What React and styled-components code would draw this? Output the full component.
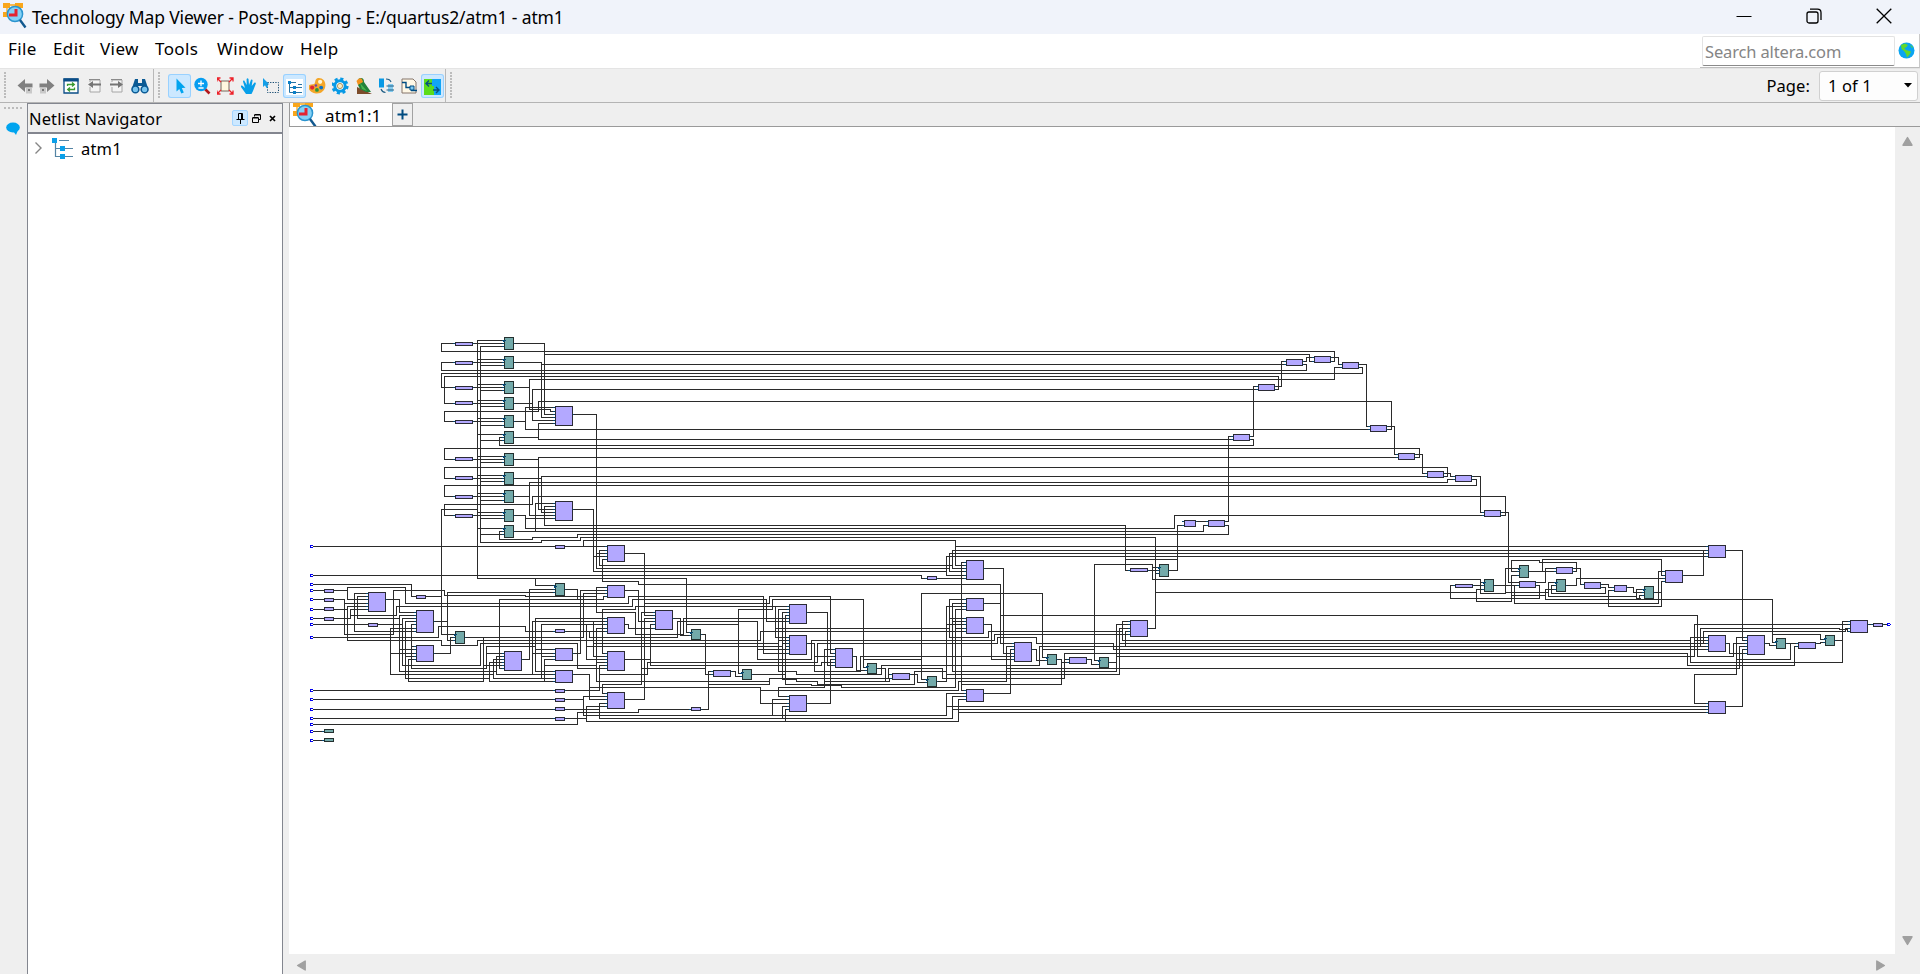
import React from "react";
import styled, { createGlobalStyle, css } from "styled-components";

const Global = createGlobalStyle`
  * { box-sizing: border-box; }
  html, body { margin: 0; padding: 0; }
  body {
    width: 1920px; height: 974px; overflow: hidden; background: #fff; color: #000;
    font-family: "Noto Sans", "Open Sans", sans-serif; font-size: 16px;
  }
  svg { display: block; flex: none; }
`;

/* ---------- schematic data: each sheet is drawn on a 3-units-per-pixel grid ---------- */

const SHEETS = [
  {
    x: 300, y: 325,
    wires: `M613 46H532V760 M613 64H541V652H724V646H841V637H2566 M613 628H541 M613 619H598V643H697V637H832V628H2550
M850 664V646H1966 M613 337H598V361H2550
M520 55H613 M520 112H613 M520 187H613 M520 235H613 M520 289H613 M520 403H613 M520 460H613 M520 514H613 M520 571H613
M532 103H613 M541 121H613 M532 178H613 M541 196H613 M532 226H613 M541 244H613 M532 280H613 M541 301H613 M532 328H613 M541 346H613
M532 394H613 M541 412H613 M532 451H613 M541 469H613 M532 505H613 M541 526H613 M532 562H613 M541 580H613 M532 610H613
M466 55H424V79H2550 M466 112H424V136H2550 M466 187H424V145H2550 M466 235H433V154H2550 M466 289H433V259H715V229H2550
M466 403H433V370H2550 M466 460H433V427H2550 M466 514H433V481H2550 M466 571H433V538H697V514H2550 M532 553H424V928H466
M641 55H733V268H766 M733 88H2550 M641 112H724V277H766 M724 118H2550 M641 187H688V253H751V259H766 M688 187V163H2550
M641 235H697V286H766 M697 235V193H2550 M641 289H676V247H766 M676 289V313H2550 M641 337H715V295H766 M715 337V343H2550
M641 403H715V553H766 M715 403V397H2550 M641 460H724V562H766 M724 460V454H2550 M641 514H688V571H766 M688 514V472H2550
M641 571H676V610H2550 M676 580H766 M641 619H2550 M706 619V535H766 M766 544H733V601H2476V735
M819 268H889V730 M819 553H880V739`,
    cells: [
      [612, 36, 642, 75], [612, 93, 642, 132], [612, 168, 642, 207], [612, 216, 642, 255], [612, 270, 642, 309], [612, 318, 642, 357],
      [612, 384, 642, 423], [612, 441, 642, 480], [612, 495, 642, 534], [612, 552, 642, 591], [612, 600, 642, 639],
    ],
    luts: [
      [465, 51, 519, 63], [465, 108, 519, 120], [465, 183, 519, 195], [465, 228, 519, 240], [465, 285, 519, 297],
      [465, 396, 519, 408], [465, 453, 519, 465], [465, 510, 519, 522], [465, 567, 519, 579],
      [765, 243, 819, 303], [765, 528, 819, 588],
    ],
  },
  {
    x: 300, y: 535,
    wires: `M39 34H922 M850 16V34 M922 46H898V91H990 M922 55H889 M889 0V100H990 M880 0V109H990 M880 64H922 M922 73H907V139H990
M39 121H990 M532 121V130H990 M706 130V151H766 M39 148H334V184H424 M39 166H142V193H205 M142 166V157H316V205H985
M39 193H133V298H280V166H433V181H676V184H889 M133 205H205 M39 223H142 M205 214H142V316H424V331H532V316H990
M39 250H151V223H205 M151 241H289V214H990 M39 268H307 M205 175H163V289H349 M205 184H172V250H298
M349 280H271V418H580 M271 355H349 M258 193H298V232H349 M349 241H298V409H589 M298 343H349
M349 250H307V391H541V325H832V400H922 M349 259H316V430H568 M316 364H349 M349 268H334V400H559V334H706 M334 334H349
M349 373H325V439H550V307 M402 259H442 M402 355H451V307H466 M442 172V316H466 M442 172H766
M39 307H415V274H676V289H766 M495 307H850V175H922 M559 355H613 M589 364V418H766 M613 364H589 M613 373H580V430H766 M613 382H568V439H766
M550 391H613 M613 400H598V193H910V184H922 M666 373H688V163H766 M795 163H832V193
M922 250H706V409H766 M706 343H766 M922 259H697V418 M697 355H766 M922 268H724V430 M724 364H766 M766 373H733V439 M733 391H889
M819 355H841V166H922 M795 289H922 M868 289V307H990 M859 268V373H922 M859 334H990 M880 259V364H922 M880 325H990
M922 157H889V232H990 M922 280H889V439H990 M889 382H922 M907 355V223H990 M907 355H922 M795 466H898V391H922 M898 418H990
M819 418H868V493H922 M868 457H990 M922 475H907V448H990 M922 484H850V541H990 M795 493H850 M922 505H898V550H990 M795 523H898
M922 514H859V559H990 M795 550H859 M39 466H766 M39 493H766 M39 523H766 M39 550H766 M39 568H832V532H990 M39 589H72 M39 616H72`,
    cells: [[765, 144, 795, 183], [465, 288, 495, 327], [72, 582, 102, 594], [72, 609, 102, 621]],
    luts: [
      [765, 30, 795, 42], [72, 162, 102, 174], [72, 189, 102, 201], [72, 216, 102, 228], [72, 246, 102, 258], [204, 264, 234, 276],
      [348, 180, 378, 192], [204, 171, 258, 231], [348, 225, 402, 294], [348, 330, 402, 381], [612, 348, 666, 408],
      [765, 282, 795, 294], [765, 339, 819, 378], [765, 405, 819, 444], [765, 462, 795, 474], [765, 489, 795, 501],
      [765, 516, 795, 528], [765, 546, 795, 558], [921, 30, 975, 81], [921, 150, 975, 189], [921, 246, 975, 297],
      [921, 348, 975, 408], [921, 471, 975, 522],
    ],
    pins: [34, 121, 148, 166, 193, 223, 250, 268, 307, 466, 493, 523, 550, 568, 589, 616].map((y) => [30, y]),
  },
  {
    x: 570, y: 535,
    wires: `M180 91H930 M180 100H930 M180 109H930 M180 121H930 M180 130H349V292H364 M349 268H505 M97 139H205V148H930
M164 55H223V241H256 M223 205H598V184H781V355H796 M164 493H223V250H256 M164 166H205V259H256 M256 232H214V448H97V475H112
M214 400H406 M393 298H406V418H430 M256 268H241V391H754V382H796 M164 373H241 M164 268H175V280H256
M89 418H232V382H742V325H930 M175 205V184H580V355H658 M180 214H187V193H589V259H658 M97 223H196V214H658 M616 214V307H658 M616 280H930
M79 232H196V298H340V250H658 M180 307H322V259H562V373H724V316H930 M562 343H658 M180 316H571V289H930 M180 325H625 M180 334H637
M658 223H625V409H679V418H934V391 M658 232H637V433H679V439H742V448H930 M658 241H646V448H724V451H814V457H930
M625 316H658 M637 325H658 M646 334H658 M309 250H331V301H364 M711 232H772V391H796 M711 325H733V409H871V364H930 M733 364H796
M796 343H763V457H625V484H658 M763 439H946 M79 439H598V430H930 M430 409H415V523H393 M415 448H598V430
M796 373H781V505H711 M658 493H607V541 M658 505H571V457H180 M571 466H930 M658 514H637V550 M658 523H646V559
M517 415H505V223H607V193H880V397H892 M880 373H930 M482 409H496V424H517 M545 418H646 M364 523H205V532H180
M849 364H859V406H892 M921 400H946V439 M180 541H930 M180 550H930 M180 559H930`,
    cells: [[363, 282, 393, 315], [516, 402, 546, 435], [891, 384, 921, 417]],
    luts: [
      [255, 225, 309, 285], [657, 207, 711, 267], [657, 300, 711, 360], [795, 339, 849, 399], [429, 405, 483, 426],
      [363, 516, 393, 528], [657, 480, 711, 531],
    ],
  },
  {
    x: 880, y: 535,
    wires: `M826 7V280H804 M226 16V91H259 M226 34H1620 M0 91H217V46H1620 M217 91V100H259 M0 100H208V55H1620 M208 100V109H259
M0 109H199V64H1620 M199 109V121H259 M0 121H124V130H142 M171 130H259 M259 82H244V466H259 M0 148H361V325H403 M361 241H1620 M361 205H312
M312 100H370V355H403 M142 433H124V175H487V367H502 M487 343H643 M658 376H643V88H817V133H1620 M817 97H838 M0 373H124
M259 193H208V307H325V289H727 M751 259H727V316H1620 M751 289H736V334 M751 280H718V418H199 M751 268H709V409H217 M718 325H1620 M709 364H1620
M4 418V391H478V334H1620 M0 280H208 M0 289H259 M208 250H259 M259 205H217V409 M217 259H259 M199 439V214H259 M199 268H259
M259 223H226V457H0 M226 280H259 M0 316H343V298H751 M0 325H352V307H469V325H700V343H1620 M0 364H403 M312 268H334V373H403
M532 373H544V448H244 M544 382H568 M568 373H553 M1620 355H553V430H187V400H25V430H0 M621 373H634V388H658 M687 382H709
M403 334H379V439H235V466H0 M379 400H1620 M403 343H391V475H312 M455 343H469V376H502 M0 400H16V439 M37 418H25 M0 439H28V430H37
M90 418H112V442H142 M171 439H199 M0 448H103V409H199 M259 475H199V541H0 M199 514H1620 M259 484H217V550H0 M217 523H1620
M259 493H235V559H0 M235 532H1620 M751 105H736 M804 106H838 M736 73H892 M867 106H892V0 M826 115H838 M826 172H1620`,
    cells: [[141, 423, 171, 456], [501, 357, 531, 390], [657, 366, 687, 399], [837, 87, 867, 126]],
    luts: [
      [258, 75, 312, 135], [141, 123, 171, 135], [258, 189, 312, 228], [258, 246, 312, 297], [402, 321, 456, 381],
      [258, 462, 312, 501], [36, 414, 90, 435], [567, 366, 621, 387], [750, 255, 804, 306], [750, 99, 804, 111],
    ],
  },
  {
    x: 1150, y: 335,
    wires: `M0 49H553V79H543 M0 58H478V79H493 M0 88H409 M0 106H469V88H459 M0 115H637V97H627 M0 124H385V163H375 M0 133H553V97H577
M0 163H325 M0 199H724V283H711 M0 283H661 M0 313H250 M300 313H310V331H0 M0 340H808V367H795 M0 367H745 M0 397H892V424H882 M0 424H832
M0 442H892V433H916 M0 451H979V433H966 M0 484H1066V541H1053 M0 580H73V541H1003 M0 589H160V571H175 M0 598H235V571H225
M225 559H235V304H250 M300 304H310V154H325 M375 154H394V79H409 M459 79H469V67H493 M543 67H565V88H577 M627 88H649V274H661
M711 274H733V358H745 M795 358H817V415H832 M882 415H901V424H916 M966 424H991V532H1003 M1053 532H1075V742H1107
M138 559H175 M99 559H103 M103 571H82V673 M7 733H991V775H1066V700H1107 M16 772H979`,
    cells: [],
    luts: [
      [408, 72, 459, 93], [492, 63, 543, 84], [576, 81, 627, 102], [324, 147, 375, 168], [249, 297, 300, 318], [660, 270, 711, 291],
      [744, 354, 795, 375], [831, 408, 882, 429], [915, 420, 966, 441], [1002, 525, 1053, 546], [102, 555, 138, 576], [174, 555, 225, 576],
    ],
  },
  {
    x: 1420, y: 530,
    wires: `M106 166H91V205H358V166H348 M159 166H193 M222 166H298 M283 166V220H715V124H736 M181 157H193
M193 178H169V214H274V136H298 M0 187H169 M298 124H274V91H358V97H469V124H459 M327 124H409 M367 124V88H724V136H736
M348 157H376V115H409 M274 196H376 M409 178H376V208H1057V337H1069 M1057 313H1201V328H1216 M256 187H385
M409 157H385V199H649 M409 166H394V190H556V172H543 M438 166H469V145H736 M459 115H481V163H493 M543 163H565V172H583
M583 181H565V229H724V154H736 M724 187H702 M621 172H640V187H673 M673 178H649V205H661 M658 205V196H673 M789 136H850V61
M0 49H865 M0 61H865 M0 70H865 M0 79H865 M918 61H967V331H982 M0 256H832V379H940V340H982 M0 331H811 M865 322H811V397H1267V274H1291
M1245 331H1267 M0 340H865 M0 349H865 M0 358H865 M0 370H802V406H1123V349H1135 M0 379H823V283H1291 M823 331H865
M841 349V295H1258V298H1282V304H1291 M850 340V304H1276V295H1291 M0 415H958V349H982 M982 322H949V433H823V520H865
M949 388H1111V340H1098 M918 340H928V370H982 M918 529H967V358H982 M1035 340H1048V346H1069 M1098 340H1135 M1188 340H1201V337H1216
M1344 283H1360 M1389 283H1401 M0 529H865 M0 538H865 M0 547H865`,
    cells: [[192, 147, 222, 186], [297, 105, 327, 144], [408, 147, 438, 186], [672, 168, 702, 207], [1068, 324, 1098, 357], [1215, 315, 1245, 348]],
    luts: [
      [105, 162, 159, 174], [297, 153, 348, 174], [408, 111, 459, 132], [492, 156, 543, 177], [582, 165, 621, 186], [735, 120, 789, 159],
      [864, 45, 918, 84], [864, 315, 918, 366], [981, 315, 1035, 375], [1134, 336, 1188, 357], [1290, 270, 1344, 309], [1359, 279, 1389, 291],
      [864, 513, 918, 552],
    ],
    outs: [[1401, 283]],
  },
];

const snap = (v) => Math.floor(v / 3);

function traceSheet(sheet) {
  const ends = [];
  let d = "";
  let cx = 0, cy = 0;
  const tokens = sheet.wires.match(/M[\d]+ [\d]+|[HV]\d+/g);
  tokens.forEach((t) => {
    if (t[0] === "M") {
      const [a, b] = t.slice(1).split(" ").map(Number);
      cx = sheet.x + snap(a);
      cy = sheet.y + snap(b);
      ends.push([cx, cy]);
      d += `M${cx + 0.5} ${cy + 0.5}`;
    } else if (t[0] === "H") {
      cx = sheet.x + snap(+t.slice(1));
      ends.push([cx, cy]);
      d += `H${cx + 0.5}`;
    } else {
      cy = sheet.y + snap(+t.slice(1));
      d += `V${cy + 0.5}`;
    }
  });
  const box = (kind) => ([a, b, c, e]) => ({
    kind, x: sheet.x + a / 3, y: sheet.y + b / 3, w: (c - a) / 3, h: (e - b) / 3,
  });
  const boxes = [...sheet.cells.map(box("cell")), ...sheet.luts.map(box("lut"))];
  let ticks = "";
  boxes.forEach((k) => {
    ends.forEach(([x, y]) => {
      if (y <= k.y || y >= k.y + k.h) return;
      if (Math.abs(x - k.x) <= 1) ticks += `M${k.x - 2} ${y + 0.5}h2`;
      if (Math.abs(x - (k.x + k.w)) <= 1) ticks += `M${k.x + k.w} ${y + 0.5}h1`;
    });
    if (k.kind === "cell" && k.h > 10) ticks += `M${k.x - 1} ${k.y + 3.5}h3M${k.x - 1} ${k.y + 4.5}h2`;
  });
  return { d, ticks, boxes };
}

const TRACED = SHEETS.map(traceSheet);

const Drawing = styled.svg`
  shape-rendering: crispEdges;
  .wire { fill: none; stroke: #2b2b2b; stroke-linecap: square; }
  .tick { fill: none; stroke: #07466f; }
  .lut { fill: #b3a8ff; stroke: #2b2b35; }
  .cell { fill: #73aaaa; stroke: #24302f; }
  .pin { fill: none; stroke: #0000f0; }
`;

function Schematic() {
  return (
    <Drawing width="1606" height="827" viewBox="289 127 1606 827">
      {TRACED.map((t, i) => <path key={i} className="wire" d={t.d} />)}
      {TRACED.map((t, i) => (
        <g key={i}>
          {t.boxes.map((b, j) => (
            <rect key={j} className={b.kind} x={b.x + 0.5} y={b.y + 0.5} width={b.w - 1} height={b.h - 1} />
          ))}
          <path className="tick" d={t.ticks} />
        </g>
      ))}
      {SHEETS.flatMap((s) => (s.pins || []).map(([x, y]) => {
        const px = s.x + snap(x), py = s.y + snap(y);
        return <path key={py} className="pin" d={`M${px + 3} ${py - 0.5}H${px + 0.5}V${py + 1.5}H${px + 3}`} />;
      }))}
      {SHEETS.flatMap((s) => (s.outs || []).map(([x, y]) => {
        const px = s.x + snap(x), py = s.y + snap(y);
        return <path key={py} className="pin" d={`M${px + 3} ${py - 0.5}H${px + 0.5}V${py + 1.5}H${px + 3}M${px + 3} ${py + 0.5}h1`} />;
      }))}
    </Drawing>
  );
}

/* ---------- window chrome ---------- */

const Shell = styled.div`
  width: 1920px; height: 974px; display: flex; flex-direction: column; background: #efefef;
`;
const TitleBar = styled.header`
  height: 34px; display: flex; align-items: center; background: #f0f3fa; padding: 0 28px 2px 2px;
`;
const Title = styled.div`
  margin-left: 5px; padding-top: 2px; font-size: 17.5px; letter-spacing: -0.14px; white-space: nowrap; line-height: 32px; flex: 1;
`;
const Controls = styled.div`display: flex; gap: 54px; align-items: center;`;
const MenuBar = styled.nav`
  height: 34px; display: flex; background: #fff; padding-left: 8px;
`;
const MenuItem = styled.span`
  width: ${(p) => p.$w}px; font-size: 17px; line-height: 29px; letter-spacing: 0.4px; white-space: nowrap;
`;
const SearchArea = styled.div`
  margin-left: auto; width: 220px; height: 34px; display: flex; align-items: center; gap: 3px;
  padding: 0 4px 0 2px; border-bottom: 1px solid #bdbdbd; border-right: 1px solid #c9c9c9;
`;
const SearchBox = styled.div`
  width: 193px; height: 30px; border: 1px solid #e3e3e3; border-bottom: 1px solid #8a8a8a; border-radius: 2px;
  color: #858585; font-size: 16.5px; line-height: 29px; letter-spacing: -0.15px; padding-left: 2px; white-space: nowrap;
`;
const ToolRow = styled.div`
  height: 35px; display: flex; border-top: 1px solid #e4e4e4; border-bottom: 1px solid #b4b4b4; background: #efefef;
`;
const ToolGroup = styled.div`
  width: ${(p) => p.$w}px; display: flex; align-items: center; padding-left: 4px;
  ${(p) => p.$line && css`border-right: 1px solid #b8b8b8;`}
`;
const Grip = styled.div`
  width: 2px; height: 27px; flex: none; margin-right: ${(p) => p.$gap || 0}px;
  background: repeating-linear-gradient(to bottom, #bcbcbc 0 2px, transparent 2px 3px);
`;
const Tool = styled.div`
  width: ${(p) => p.$w || 23}px; height: 24px; display: flex; align-items: center; justify-content: center; flex: none;
  ${(p) => p.$on && css`background: #cce8ff; box-shadow: inset 0 0 0 1px #99d1ff; border-radius: 3px;`}
`;
const PageArea = styled.div`
  margin-left: auto; display: flex; align-items: center; padding-right: 2px; font-size: 16.5px; letter-spacing: 0.1px;
`;
const PageSelect = styled.div`
  width: 99px; height: 30px; margin-left: 9px; display: flex; align-items: center; justify-content: space-between;
  padding: 0 5px 0 8px; background: #fdfdfd; border: 1px solid #d0d0d0; border-radius: 3px;
`;
const Body = styled.div`flex: 1; display: flex; min-height: 0;`;
const Rail = styled.aside`
  width: 27px; display: flex; flex-direction: column; align-items: center; padding: 4px 2px 0 0; gap: 13px;
`;
const RailGrip = styled.div`
  width: 18px; height: 2px; background: repeating-linear-gradient(to right, #bcbcbc 0 2px, transparent 2px 4px);
`;
const Navigator = styled.section`
  width: 256px; border: 1px solid #83868f; border-bottom: 0; border-top-color: #83868f; background: #fff;
  display: flex; flex-direction: column;
`;
const NavHeader = styled.div`
  height: 30px; border-bottom: 2px solid #83868f; background: #efefef; display: flex; align-items: center; padding-left: 1px;
`;
const NavTitle = styled.span`font-size: 16.5px; flex: 1; line-height: 27px; padding-top: 1px; letter-spacing: 0.12px;`;
const NavButtons = styled.div`display: flex; align-items: center; padding-right: 6px; gap: 8px; height: 26px;`;
const PinButton = styled.div`
  width: 16px; height: 16px; display: flex; align-items: center; justify-content: center; margin-right: -4px;
  background: #cce8ff; border: 1px solid #a3d5ff; border-radius: 2px;
`;
const TreeRow = styled.div`
  height: 28px; display: flex; align-items: center; padding-left: 6px; font-size: 16.5px; letter-spacing: 0.2px;
  svg + svg { margin-left: 9px; }
  span { margin-left: 7px; }
`;
const Workspace = styled.main`
  flex: 1; margin-left: 6px; display: flex; flex-direction: column; min-width: 0;
`;
const TabStrip = styled.div`height: 24px; display: flex; border-bottom: 1px solid #9a9a9a;`;
const Tab = styled.div`
  width: 103px; height: 23px; background: #fff; border-left: 1px solid #9a9a9a; display: flex; align-items: center; overflow: hidden;
  padding-left: 2px; font-size: 17px; letter-spacing: 0.15px;
  span { margin-left: 8px; line-height: 22px; padding-top: 2px; }
`;
const AddTab = styled.div`
  width: 21px; height: 23px; border: 1px solid #a2a2a2; display: flex; align-items: center; justify-content: center;
  padding-bottom: 1px;
`;
const ViewRow = styled.div`display: flex; height: 827px;`;
const Canvas = styled.div`background: #fff;`;
const VScroll = styled.div`
  width: 25px; display: flex; flex-direction: column; justify-content: space-between; align-items: center; padding: 9px 0 8px;
`;
const HScroll = styled.div`
  flex: 1; display: flex; justify-content: space-between; align-items: center; padding: 3px 34px 0 7px;
`;

const Arrow = ({ dir }) => (
  <svg width="11" height="11" viewBox="0 0 11 11">
    <path d="M5.5 1.6L10 9.2H1Z" fill="#a0a0a0" stroke="#a0a0a0" strokeWidth="1.4" strokeLinejoin="round" transform={`rotate(${dir} 5.5 5.5)`} />
  </svg>
);

const AppIcon = () => (
  <svg width="25" height="26" viewBox="0 0 25 26">
    <path d="M1 0H8V5H1ZM13 0H21V5H13ZM1 9H8V14H1Z" fill="#f9a61b" />
    <path d="M8 2H14M5 4V10M6 11H9" stroke="#f9a61b" strokeWidth="1.3" />
    <circle cx="13" cy="11" r="7.6" fill="#84d1f5" stroke="#2b94cf" strokeWidth="1.5" />
    <path d="M7 12H14V6" fill="none" stroke="#e42330" strokeWidth="3" />
    <path d="M18 17L23.5 24.5" stroke="#11588f" strokeWidth="2.4" />
  </svg>
);

const I = ({ w = 18, children }) => <svg width={w} height="18" viewBox={`0 0 ${w} 18`}>{children}</svg>;

const HistoryArrow = ({ flip }) => (
  <I>
    <g transform={flip ? "translate(18 0) scale(-1 1)" : undefined}>
      <path d="M1.5 8.5L9 2V6.5H16.5V10.5H9V15Z" fill="#808080" />
      <path d="M10 10.5H16V16.5H10Z" fill="#c9c9c9" /><path d="M12 12H14V14H12Z" fill="#777" />
    </g>
  </I>
);
const PageArrow = ({ flip }) => (
  <I>
    <path d="M4 5V3H14V15H4V10" fill="#f4f4f4" stroke="#a6a6a6" />
    <path d="M3 2.5H14" stroke="#8b8b8b" />
    <path d="M2 7.5L7 4V6.5H15V8.5H7V11Z" fill="#757575" transform={flip ? "translate(17 0) scale(-1 1)" : undefined} />
  </I>
);

export default function App() {
  return (
    <>
      <Global />
      <Shell>
        <TitleBar>
          <AppIcon />
          <Title>Technology Map Viewer - Post-Mapping - E:/quartus2/atm1 - atm1</Title>
          <Controls>
            <svg width="16" height="16" viewBox="0 0 16 16"><path d="M0.5 8.5H15.5" stroke="#000" /></svg>
            <svg width="16" height="16" viewBox="0 0 16 16" fill="none" stroke="#000" strokeWidth="1.3">
              <rect x="1" y="4" width="11" height="11" rx="2" /><path d="M4 1.2H11.5Q15 1.2 15 4.7V12" />
            </svg>
            <svg width="16" height="16" viewBox="0 0 16 16"><path d="M0.7 0.7L15.3 15.3M15.3 0.7L0.7 15.3" stroke="#000" strokeWidth="1.3" /></svg>
          </Controls>
        </TitleBar>
        <MenuBar>
          <MenuItem $w={45}>File</MenuItem>
          <MenuItem $w={47}>Edit</MenuItem>
          <MenuItem $w={55}>View</MenuItem>
          <MenuItem $w={62}>Tools</MenuItem>
          <MenuItem $w={83}>Window</MenuItem>
          <MenuItem $w={60}>Help</MenuItem>
          <SearchArea>
            <SearchBox>Search altera.com</SearchBox>
            <svg width="17" height="17" viewBox="0 0 17 17">
              <circle cx="8.5" cy="8.5" r="8" fill="#0aa5f2" />
              <path d="M3 3L7 1.5L10 3L8 5.5L6 6L8 8L13 9.5L12 12L9 15.5L8 12L6 9L3.5 7ZM12 2.5L15 5L14 6Z" fill="#62d82c" />
            </svg>
          </SearchArea>
        </MenuBar>
        <ToolRow>
          <ToolGroup $w={154} $line>
            <Grip $gap={8} />
            <Tool $w={22}><HistoryArrow /></Tool>
            <Tool $w={22}><HistoryArrow flip /></Tool>
            <Tool $w={25}><I><path d="M2 2H16V16H2Z" fill="#fff" stroke="#0a4d87" strokeWidth="1.3" /><path d="M1.5 1.5H16.5V4.5H1.5Z" fill="#0a4d87" /><path d="M5.5 9V7.5H12M10 5.5L12.3 7.5L10 9.5M12.5 10.5V12.5H6M8 10.5L5.7 12.5L8 14.5" fill="none" stroke="#3a9a32" strokeWidth="1.3" /></I></Tool>
            <Tool $w={23}><PageArrow /></Tool>
            <Tool $w={21}><PageArrow flip /></Tool>
            <Tool $w={25}><I><path d="M4 2H7V6H11V2H14L17 11V14H11V9H7V14H1V11Z" fill="#0b5a94" /><circle cx="4.4" cy="12.4" r="3.4" fill="#78c4ee" stroke="#0b5a94" strokeWidth="1.6" /><circle cx="13.6" cy="12.4" r="3.4" fill="#78c4ee" stroke="#0b5a94" strokeWidth="1.6" /></I></Tool>
          </ToolGroup>
          <ToolGroup $w={292} $line>
            <Grip $gap={8} />
            <Tool $on><I><path d="M5.5 1.5V14.5L8.3 12L10.3 16.5L12.8 15.4L10.8 11L14.5 10.7Z" fill="#00a4ef" /></I></Tool>
            <Tool><I><path d="M11 12L15.5 16.5" stroke="#b4181c" strokeWidth="2.6" /><circle cx="7" cy="7.5" r="6.7" fill="#069df0" /><path d="M4 6.5H10M7 3.5V9.2M4.4 11H9.6" stroke="#fff" strokeWidth="1.3" /></I></Tool>
            <Tool><svg width="18" height="18" viewBox="1 0 18 18"><path d="M5 4H13V14H5Z" fill="#fff8df" stroke="#75665c" /><path d="M5 5L1 1M1 4.5V1H4.5M13 5L17 1M13.5 1H17V4.5M5 13L1 17M1 13.5V17H4.5M13 13L17 17M17 13.5V17H13.5" fill="none" stroke="#ed2028" strokeWidth="1.3" /></svg></Tool>
            <Tool><svg width="18" height="18" viewBox="1 0 18 18"><path d="M7 17L2 10Q1.5 8 3.5 8.8L6 11L4 4.5Q4 3 5.2 3.5L7.7 8L7.6 2Q8.4 .6 9.5 2L10 8L12 2.7Q13.2 2 13.6 3.2L12.7 9L15.5 5.5Q17 5 16.8 6.7L14 14L12.5 17Z" fill="#079fe9" /></svg></Tool>
            <Tool><svg width="18" height="18" viewBox="1 0 18 18"><path d="M5.5 5.5H16.5V15.5H5.5Z" fill="none" stroke="#174c72" strokeDasharray="1.3 1.3" /><path d="M1 1V10L3 8.3L4.5 11L6 10.2L5 7.5H7.5Z" fill="#129fe8" /></svg></Tool>
            <Tool $on><svg width="17" height="18" viewBox="0 0 17 18"><path d="M0 2H17V18H0Z" fill="#fff" /><path d="M3.5 5V15.5H8M3.5 10.5H8M3.5 5.5H10M10 10.5H16M10 15.5H16M12 7.5H16" fill="none" stroke="#2673a4" /><path d="M2 4H5V7H2ZM7 9H10V12H7ZM7 14H10V17H7Z" fill="#0a80c8" /></svg></Tool>
            <Tool><svg width="18" height="18" viewBox="1.5 0.5 17 17"><path d="M10 1.5C14 1 17 4 17 8C17 13 13 16.5 8 16C4 15.5 1 13 1 10C1 7 4 7.5 6.5 7C8 6 6.5 2.5 10 1.5Z" fill="#f4a629" /><circle cx="12" cy="5" r="2" fill="#fff5d4" /><circle cx="4.5" cy="10.5" r="2" fill="#de2835" /><circle cx="9" cy="12.7" r="1.8" fill="#27963d" /><circle cx="13" cy="10.5" r="1.8" fill="#0a72c6" /><circle cx="8" cy="8.5" r="1.2" fill="#7640a0" /></svg></Tool>
            <Tool><svg width="18" height="18" viewBox="1 0 18 18"><circle cx="9" cy="9" r="7" fill="none" stroke="#0799e5" strokeWidth="3.2" strokeDasharray="3 2.5" /><circle cx="9" cy="9" r="5.2" fill="#fff" stroke="#0799e5" strokeWidth="3" /><circle cx="9" cy="9" r="2.6" fill="#fbeec3" stroke="#9a7b42" strokeWidth=".8" /></svg></Tool>
            <Tool><I><path d="M2 10V17H17Z" fill="#7c4c2b" /><path d="M3 4Q3 1 6 1Q9 1 9 5L16 15H11L5 12L3 8Z" fill="#23813b" /><path d="M1.5 4Q4 0 7 2L8 5L3 8Z" fill="#f2911c" /><path d="M5 6L12 14L7 12Z" fill="#47b64d" /></I></Tool>
            <Tool><svg width="18" height="18" viewBox="1 0 18 18"><path d="M2 1.5H7V10.5H2Z" fill="#0799e5" /><path d="M11 7H16V15H11Z" fill="#83cbee" /><path d="M9 2Q13 2 14 5M4 12Q5 15 8.5 15.5M9.5 9H17M9.5 13H17" fill="none" stroke="#215f86" strokeWidth="1.2" /></svg></Tool>
            <Tool><svg width="18" height="18" viewBox="1 0 18 18"><path d="M2 2H13L16 5V16H2Z" fill="#fff8e6" stroke="#85756b" /><path d="M2 5.5H6V10.5H13M11 13.5H17" fill="none" stroke="#004d83" strokeWidth="1.4" /><path d="M10 9H14V13H10Z" fill="#7dc9f1" stroke="#004d83" /></svg></Tool>
            <Tool $on><svg width="17" height="18" viewBox="0 0 17 18"><path d="M0 2H17V18H0Z" fill="#12a5f5" /><path d="M0 2H8V9H10V18H0Z" fill="#5bdc1b" /><path d="M2 6.5H8M5 3.5L2 6.5L5 9.5M9 13H15M12 10L15 13L12 16" fill="none" stroke="#07517f" strokeWidth="1.4" /></svg></Tool>
          </ToolGroup>
          <ToolGroup $w={12}><Grip /></ToolGroup>
          <PageArea>
            Page:
            <PageSelect>
              1 of 1
              <svg width="8" height="5" viewBox="0 0 8 5"><path d="M0 0H8L4 4.5Z" fill="#000" /></svg>
            </PageSelect>
          </PageArea>
        </ToolRow>
        <Body>
          <Rail>
            <RailGrip />
            <svg width="14" height="14" viewBox="0 0 14 14"><ellipse cx="7" cy="5.5" rx="6.8" ry="5" fill="#00a4ef" /><path d="M7 9L12 8L10 13Z" fill="#00a4ef" /></svg>
          </Rail>
          <Navigator>
            <NavHeader>
              <NavTitle>Netlist Navigator</NavTitle>
              <NavButtons>
                <PinButton>
                  <svg width="9" height="11" viewBox="0 0 9 11" fill="none" stroke="#000"><path d="M2.5 6.5V.5H6.5V6.5M5.5 .5V6.5M.5 6.5H8.5M4.5 7V11" /></svg>
                </PinButton>
                <svg width="9" height="9" viewBox="0 0 9 9" fill="none" stroke="#000"><path d="M2.5 2.5V1H8.5V5.5H7M2.5 .5H8.5M.5 4H6.5V8.5H.5ZM.5 3.5H6.5" /></svg>
                <svg width="7" height="7" viewBox="0 0 7 7"><path d="M1 1L6 6M6 1L1 6" stroke="#000" strokeWidth="1.7" /></svg>
              </NavButtons>
            </NavHeader>
            <TreeRow>
              <svg width="9" height="14" viewBox="0 0 9 14"><path d="M1.5 1.5L7 7L1.5 12.5" fill="none" stroke="#858585" strokeWidth="1.4" /></svg>
              <svg width="22" height="22" viewBox="0 0 22 22"><path d="M3.5 4V19.5H9M3.5 11.5H9M7 3.5H17M13 11.5H21M13 19.5H21" fill="none" stroke="#5484a4" strokeWidth="1.2" /><path d="M0 1H5V6H0ZM8 9H13V14H8ZM8 17H13V22H8Z" fill="#0ba0e9" /></svg>
              <span>atm1</span>
            </TreeRow>
          </Navigator>
          <Workspace>
            <TabStrip>
              <Tab><AppIcon /><span>atm1:1</span></Tab>
              <AddTab><svg width="11" height="11" viewBox="0 0 11 11"><path d="M5.5 .5V10.5M.5 5.5H10.5" stroke="#004b80" strokeWidth="2" /></svg></AddTab>
            </TabStrip>
            <ViewRow>
              <Canvas><Schematic /></Canvas>
              <VScroll><Arrow dir={0} /><Arrow dir={180} /></VScroll>
            </ViewRow>
            <HScroll><Arrow dir={-90} /><Arrow dir={90} /></HScroll>
          </Workspace>
        </Body>
      </Shell>
    </>
  );
}
